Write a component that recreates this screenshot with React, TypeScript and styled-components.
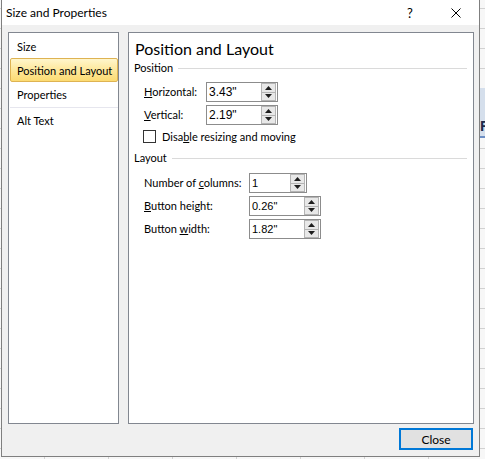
import React from "react";
import styled, { createGlobalStyle } from "styled-components";

const UI_FONT = `Lato, "Noto Sans", sans-serif`;

const GlobalStyle = createGlobalStyle`
  html, body { margin: 0; padding: 0; }
  body {
    font-family: ${UI_FONT};
    font-size: 11px;
    color: #000;
    background: #f4f4f4;
  }
  #root { width: 485px; height: 459px; overflow: hidden; }
`;

const Desktop = styled.div`
  position: relative;
  width: 485px;
  height: 459px;
  overflow: hidden;
  background-color: #f7f7f7;
  background-image: linear-gradient(to right, #d2d2d2 1px, transparent 1px),
    linear-gradient(to bottom, #d2d2d2 1px, transparent 1px);
  background-size: 64px 20px;
  background-position: 44px 8px;
  display: flex;
  align-items: flex-start;
`;

const SheetBand = styled.div`
  position: absolute;
  left: 480px;
  top: 88px;
  width: 5px;
  height: 50px;
  background: #d5dfec;
  border-bottom: 2px solid #6d8fc4;
  overflow: hidden;
  font-family: "Liberation Sans", sans-serif;
  font-weight: bold;
  font-size: 15px;
  color: #1c2a4a;
  line-height: 18px;
  padding-top: 29px;
  box-sizing: border-box;
`;

const Window = styled.div`
  position: relative;
  z-index: 1;
  margin-left: 1px;
  width: 479px;
  height: 457px;
  box-sizing: border-box;
  border: 1px solid #7f7f7f;
  border-top: none;
  background: #f0f0f0;
  display: flex;
  flex-direction: column;
`;

const TitleBar = styled.div`
  height: 25px;
  flex: 0 0 25px;
  background: #ffffff;
  display: flex;
  align-items: center;
`;

const Title = styled.div`
  flex: 1;
  padding-left: 4px;
  font-family: ${UI_FONT};
  font-size: 12px;
  line-height: 16px;
  color: #000;
`;

const CaptionButton = styled.div`
  width: 46px;
  height: 25px;
  display: flex;
  align-items: center;
  justify-content: center;
  font-family: ${UI_FONT};
  font-size: 13px;
  color: #000;
`;

const Body = styled.div`
  flex: 1;
  display: flex;
  flex-direction: column;
  padding: 7px 5px 6px 6px;
`;

const Panels = styled.div`
  display: flex;
  gap: 9px;
  height: 392px;
`;

const Panel = styled.div`
  box-sizing: border-box;
  border: 1px solid #828790;
  background: #ffffff;
`;

const ListPanel = styled(Panel)`
  width: 111px;
  flex: 0 0 111px;
  padding: 1px 0 0 1px;
  display: flex;
  flex-direction: column;
`;

const ListItem = styled.div<{ $selected?: boolean }>`
  box-sizing: border-box;
  height: 24px;
  display: flex;
  align-items: center;
  padding-left: ${(p) => (p.$selected ? 6 : 7)}px;
  font-family: ${UI_FONT};
  font-size: 11px;
  color: #000;
  white-space: nowrap;
  border-radius: 2px;
  border: ${(p) => (p.$selected ? "1px solid #deb352" : "none")};
  background: ${(p) =>
    p.$selected
      ? "linear-gradient(to bottom, #fff6cc 0%, #fee9a0 45%, #fcdb72 100%)"
      : "transparent"};
`;

const ListSeparator = styled.div`
  height: 1px;
  margin-top: 1px;
  background: #e6e6ee;
`;

const ContentPanel = styled(Panel)`
  flex: 1;
  padding: 5px 6px 0 5px;
  display: flex;
  flex-direction: column;
`;

const Heading = styled.div`
  margin-left: 1px;
  font-family: ${UI_FONT};
  font-size: 16px;
  line-height: 21px;
  color: #000;
`;

const SectionHeader = styled.div<{ $top: number }>`
  margin-top: ${(p) => p.$top}px;
  height: 16px;
  display: flex;
  align-items: center;
  gap: 5px;
  font-family: ${UI_FONT};
  font-size: 11px;
  line-height: 16px;
`;

const Rule = styled.div`
  flex: 1;
  height: 1px;
  margin-top: 1px;
  background: #dadada;
`;

const FieldGrid = styled.div<{ $labelWidth: number; $top: number }>`
  margin-top: ${(p) => p.$top}px;
  padding-left: 10px;
  display: grid;
  grid-template-columns: ${(p) => p.$labelWidth}px auto;
  row-gap: 3px;
  justify-content: start;
  align-items: center;
`;

const FieldLabel = styled.div`
  font-family: ${UI_FONT};
  font-size: 11px;
  line-height: 16px;
  white-space: nowrap;
`;

const Key = styled.span`
  text-decoration: underline;
  text-underline-offset: 1px;
`;

const SpinBox = styled.div<{ $width: number }>`
  box-sizing: border-box;
  width: ${(p) => p.$width}px;
  height: 20px;
  border: 1px solid #8c8c8c;
  background: #fff;
  display: flex;
  align-items: stretch;
  padding: 0 1px 0 2px;
`;

const SpinValue = styled.div<{ $small?: boolean }>`
  flex: 1;
  font-family: "Liberation Sans", sans-serif;
  font-size: ${(p) => (p.$small ? 11 : 12)}px;
  line-height: 18px;
  color: #000;
`;

const Spinner = styled.div`
  box-sizing: border-box;
  width: 15px;
  display: flex;
  flex-direction: column;
  border: 1px solid #b4b4b4;
  background: #e8e8e8;
`;

const SpinHalf = styled.div<{ $bottom?: boolean }>`
  flex: 1;
  display: flex;
  align-items: center;
  justify-content: center;
  border-top: ${(p) => (p.$bottom ? "1px solid #b4b4b4" : "none")};
`;

const CheckRow = styled.div`
  margin-top: 3px;
  height: 17px;
  padding-left: 9px;
  display: flex;
  align-items: center;
  gap: 6px;
`;

const CheckBox = styled.div`
  box-sizing: border-box;
  width: 13px;
  height: 13px;
  border: 1px solid #333;
  background: #fff;
`;

const Footer = styled.div`
  margin-top: 4px;
  display: flex;
  justify-content: flex-end;
  padding-right: 1px;
`;

const CloseButton = styled.div`
  box-sizing: border-box;
  width: 74px;
  height: 22px;
  border: 2px solid #0078d7;
  background: #e1e1e1;
  display: flex;
  align-items: center;
  justify-content: center;
  font-family: ${UI_FONT};
  font-size: 12px;
  color: #000;
`;

const UpArrow = () => (
  <svg width="7" height="4" viewBox="0 0 7 4">
    <polygon points="3.5,0 7,4 0,4" fill="#1e1e1e" />
  </svg>
);

const DownArrow = () => (
  <svg width="7" height="4" viewBox="0 0 7 4">
    <polygon points="0,0 7,0 3.5,4" fill="#1e1e1e" />
  </svg>
);

const Spin = ({ value, width, small }: { value: string; width: number; small?: boolean }) => (
  <SpinBox $width={width}>
    <SpinValue $small={small}>{value}</SpinValue>
    <Spinner>
      <SpinHalf>
        <UpArrow />
      </SpinHalf>
      <SpinHalf $bottom>
        <DownArrow />
      </SpinHalf>
    </Spinner>
  </SpinBox>
);

export default function App() {
  return (
    <>
      <GlobalStyle />
      <Desktop>
        <SheetBand>R</SheetBand>
        <Window>
          <TitleBar>
            <Title>Size and Properties</Title>
            <CaptionButton>?</CaptionButton>
            <CaptionButton>
              <svg width="10" height="10" viewBox="0 0 10 10">
                <path d="M0.5 0.5 L9.5 9.5 M9.5 0.5 L0.5 9.5" stroke="#000" strokeWidth="1" />
              </svg>
            </CaptionButton>
          </TitleBar>
          <Body>
            <Panels>
              <ListPanel>
                <ListItem>Size</ListItem>
                <ListItem $selected>Position and Layout</ListItem>
                <ListItem>Properties</ListItem>
                <ListSeparator />
                <ListItem>Alt Text</ListItem>
              </ListPanel>
              <ContentPanel>
                <Heading>Position and Layout</Heading>
                <SectionHeader $top={1}>
                  <span>Position</span>
                  <Rule />
                </SectionHeader>
                <FieldGrid $labelWidth={62} $top={6}>
                  <FieldLabel>
                    <Key>H</Key>orizontal:
                  </FieldLabel>
                  <Spin value={'3.43"'} width={72} />
                  <FieldLabel>
                    <Key>V</Key>ertical:
                  </FieldLabel>
                  <Spin value={'2.19"'} width={72} />
                </FieldGrid>
                <CheckRow>
                  <CheckBox />
                  <FieldLabel>
                    Disa<Key>b</Key>le resizing and moving
                  </FieldLabel>
                </CheckRow>
                <SectionHeader $top={5}>
                  <span>Layout</span>
                  <Rule />
                </SectionHeader>
                <FieldGrid $labelWidth={105} $top={7}>
                  <FieldLabel>
                    Number of <Key>c</Key>olumns:
                  </FieldLabel>
                  <Spin value="1" width={58} small />
                  <FieldLabel>
                    <Key>B</Key>utton height:
                  </FieldLabel>
                  <Spin value={'0.26"'} width={72} small />
                  <FieldLabel>
                    Button <Key>w</Key>idth:
                  </FieldLabel>
                  <Spin value={'1.82"'} width={72} small />
                </FieldGrid>
              </ContentPanel>
            </Panels>
            <Footer>
              <CloseButton>Close</CloseButton>
            </Footer>
          </Body>
        </Window>
      </Desktop>
    </>
  );
}
